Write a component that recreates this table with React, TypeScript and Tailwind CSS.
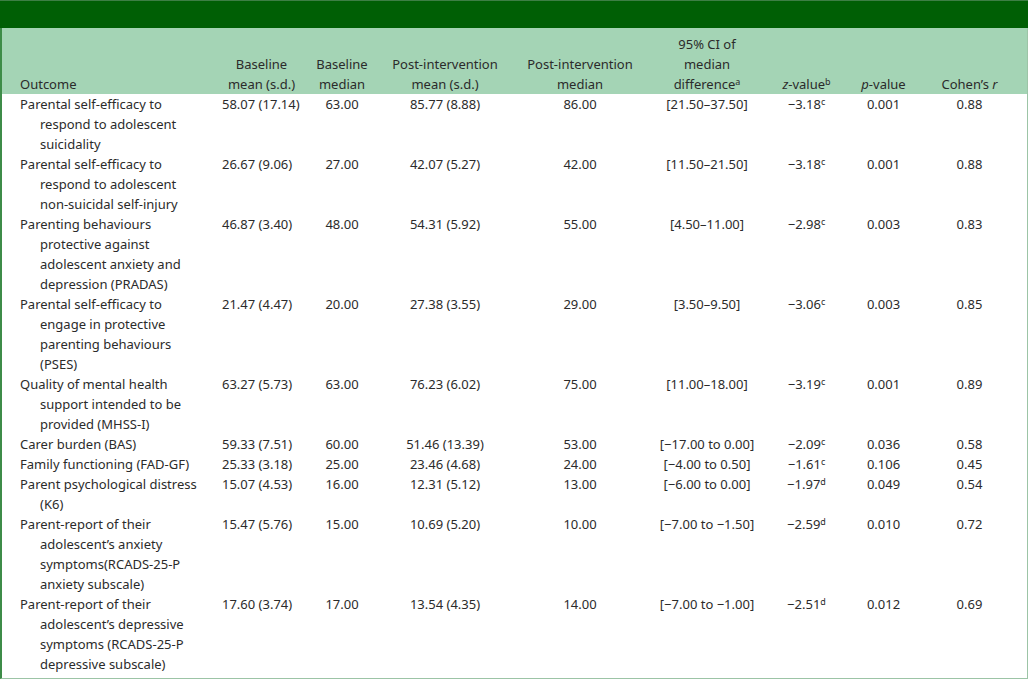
import React from 'react';

interface Row {
  lines: string[];
  baseMean: string;
  baseMedian: string;
  postMean: string;
  postMedian: string;
  ci: string;
  z: string;
  zNote: string;
  p: string;
  r: string;
}

const rows: Row[] = [
  { lines: ['Parental self-efficacy to', 'respond to adolescent', 'suicidality'], baseMean: '58.07 (17.14)', baseMedian: '63.00', postMean: '85.77 (8.88)', postMedian: '86.00', ci: '[21.50–37.50]', z: '−3.18', zNote: 'c', p: '0.001', r: '0.88' },
  { lines: ['Parental self-efficacy to', 'respond to adolescent', 'non-suicidal self-injury'], baseMean: '26.67 (9.06)', baseMedian: '27.00', postMean: '42.07 (5.27)', postMedian: '42.00', ci: '[11.50–21.50]', z: '−3.18', zNote: 'c', p: '0.001', r: '0.88' },
  { lines: ['Parenting behaviours', 'protective against', 'adolescent anxiety and', 'depression (PRADAS)'], baseMean: '46.87 (3.40)', baseMedian: '48.00', postMean: '54.31 (5.92)', postMedian: '55.00', ci: '[4.50–11.00]', z: '−2.98', zNote: 'c', p: '0.003', r: '0.83' },
  { lines: ['Parental self-efficacy to', 'engage in protective', 'parenting behaviours', '(PSES)'], baseMean: '21.47 (4.47)', baseMedian: '20.00', postMean: '27.38 (3.55)', postMedian: '29.00', ci: '[3.50–9.50]', z: '−3.06', zNote: 'c', p: '0.003', r: '0.85' },
  { lines: ['Quality of mental health', 'support intended to be', 'provided (MHSS-I)'], baseMean: '63.27 (5.73)', baseMedian: '63.00', postMean: '76.23 (6.02)', postMedian: '75.00', ci: '[11.00–18.00]', z: '−3.19', zNote: 'c', p: '0.001', r: '0.89' },
  { lines: ['Carer burden (BAS)'], baseMean: '59.33 (7.51)', baseMedian: '60.00', postMean: '51.46 (13.39)', postMedian: '53.00', ci: '[−17.00 to 0.00]', z: '−2.09', zNote: 'c', p: '0.036', r: '0.58' },
  { lines: ['Family functioning (FAD-GF)'], baseMean: '25.33 (3.18)', baseMedian: '25.00', postMean: '23.46 (4.68)', postMedian: '24.00', ci: '[−4.00 to 0.50]', z: '−1.61', zNote: 'c', p: '0.106', r: '0.45' },
  { lines: ['Parent psychological distress', '(K6)'], baseMean: '15.07 (4.53)', baseMedian: '16.00', postMean: '12.31 (5.12)', postMedian: '13.00', ci: '[−6.00 to 0.00]', z: '−1.97', zNote: 'd', p: '0.049', r: '0.54' },
  { lines: ['Parent-report of their', 'adolescent’s anxiety', 'symptoms(RCADS-25-P', 'anxiety subscale)'], baseMean: '15.47 (5.76)', baseMedian: '15.00', postMean: '10.69 (5.20)', postMedian: '10.00', ci: '[−7.00 to −1.50]', z: '−2.59', zNote: 'd', p: '0.010', r: '0.72' },
  { lines: ['Parent-report of their', 'adolescent’s depressive', 'symptoms (RCADS-25-P', 'depressive subscale)'], baseMean: '17.60 (3.74)', baseMedian: '17.00', postMean: '13.54 (4.35)', postMedian: '14.00', ci: '[−7.00 to −1.00]', z: '−2.51', zNote: 'd', p: '0.012', r: '0.69' },
];

// preflight already lifts <sup> by half an em
const Sup: React.FC<{ children: React.ReactNode }> = ({ children }) => (
  <sup className="text-[9px]">{children}</sup>
);

const App: React.FC = () => {
  return (
    <div
      className="w-[1028px] bg-white text-[#2b2b2b] text-[13px] leading-[20px]"
      style={{ fontFamily: '"Noto Sans", "Liberation Sans", sans-serif' }}
    >
      {/* Dark title band */}
      <div className="h-[28px] bg-[#005f05] border-t border-[#3d7f45]" />

      <div className="border-l-2 border-l-[#3e8c48] border-r border-r-[#9cc4a6] border-b border-b-[#9cc4a6] pb-[4px]">
        <table className="w-full table-fixed border-collapse">
          <colgroup>
            <col className="w-[213px]" />
            <col className="w-[93px]" />
            <col className="w-[68px]" />
            <col className="w-[138px]" />
            <col className="w-[132px]" />
            <col className="w-[122px]" />
            <col className="w-[77px]" />
            <col className="w-[77px]" />
            <col />
          </colgroup>
          <thead>
            <tr className="bg-[#a4d4b5] align-bottom">
              <th className="pt-[6px] pl-[18px] text-left font-normal">Outcome</th>
              <th className="pt-[6px] font-normal text-center">Baseline<br />mean (s.d.)</th>
              <th className="pt-[6px] font-normal text-center">Baseline<br />median</th>
              <th className="pt-[6px] font-normal text-center">Post-intervention<br />mean (s.d.)</th>
              <th className="pt-[6px] font-normal text-center">Post-intervention<br />median</th>
              <th className="pt-[6px] font-normal text-center">
                95% CI of<br />median<br />difference<Sup>a</Sup>
              </th>
              <th className="pt-[6px] font-normal text-center">
                <i>z</i>-value<Sup>b</Sup>
              </th>
              <th className="pt-[6px] font-normal text-center">
                <i>p</i>-value
              </th>
              <th className="pt-[6px] pr-[10px] font-normal text-center">
                Cohen’s <i>r</i>
              </th>
            </tr>
          </thead>
          <tbody>
            {rows.map((row, i) => (
              <tr key={i} className="align-top">
                <td className="pl-[18px]">
                  {row.lines.map((line, j) => (
                    <div key={j} className={j > 0 ? 'pl-[20px] whitespace-nowrap' : 'whitespace-nowrap'}>
                      {line}
                    </div>
                  ))}
                </td>
                <td className="pl-[7px] whitespace-nowrap">{row.baseMean}</td>
                <td className="text-center">{row.baseMedian}</td>
                <td className="text-center whitespace-nowrap">{row.postMean}</td>
                <td className="text-center">{row.postMedian}</td>
                <td className="text-center whitespace-nowrap">{row.ci}</td>
                <td className="text-center whitespace-nowrap">
                  {row.z}
                  <Sup>{row.zNote}</Sup>
                </td>
                <td className="text-center">{row.p}</td>
                <td className="text-center pr-[10px]">{row.r}</td>
              </tr>
            ))}
          </tbody>
        </table>
      </div>
    </div>
  );
};

export default App;
